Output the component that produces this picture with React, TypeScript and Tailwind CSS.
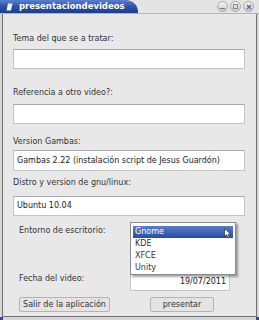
import React from 'react';

const font = { fontFamily: '"DejaVu Sans", Verdana, sans-serif' };

function Field({ value, className = '' }: { value?: string; className?: string }) {
  return (
    <div
      className={`w-[232px] h-[20px] bg-white border border-[#c4c4c4] border-t-[#a8a8a8] flex items-center px-[3px] text-[8px] text-[#222] ${className}`}
    >
      {value}
    </div>
  );
}

function WinButton({ children }: { children: React.ReactNode }) {
  return (
    <div className="w-[11px] h-[11px] rounded-full border border-[#a9a9a9] bg-gradient-to-b from-[#f4f4f4] to-[#c9c9c9] flex items-center justify-center">
      {children}
    </div>
  );
}

export default function App() {
  return (
    <div style={font} className="w-[259px] h-[320px] bg-[#d6d6d6] flex flex-col overflow-hidden relative">
      {/* title bar */}
      <div className="h-[14px] flex bg-[#e4e4e4] border-b border-[#b5b5b5] shrink-0">
        <div className="w-[138px] h-full bg-gradient-to-b from-[#5c80d0] via-[#2f52a6] to-[#1d3c8c] rounded-tr-[12px] flex items-center pl-[6px] gap-[6px]">
          <svg width="7" height="8" viewBox="0 0 7 8">
            <path d="M2 0.5 L6.5 0.5 L5 7.5 L0.5 7.5 Z" fill="#f2f2f2" />
          </svg>
          <span className="text-white font-bold text-[8.5px] leading-none">presentaciondevideos</span>
        </div>
        <div className="flex-1 flex items-center justify-end gap-[2px] pr-[5px]">
          <WinButton>
            <div className="w-[5px] h-[1px] bg-[#777] mt-[3px]" />
          </WinButton>
          <WinButton>
            <div className="w-[5px] h-[5px] border border-[#888]" />
          </WinButton>
          <WinButton>
            <svg width="6" height="6" viewBox="0 0 6 6">
              <path d="M1 1 L5 5 M5 1 L1 5" stroke="#4a66a8" strokeWidth="1.3" />
            </svg>
          </WinButton>
        </div>
      </div>

      {/* body */}
      <div className="flex-1 mx-[2px] border-x border-b border-[#707070] bg-[#e8e8e8] flex flex-col pl-[10px] text-[8px] text-[#333] leading-[10px]">
        <div className="mt-[20px]">Tema del que se a tratar:</div>
        <Field className="mt-[5px]" />

        <div className="mt-[19px]">Referencia a otro video?:</div>
        <Field className="mt-[6px]" />

        <div className="mt-[13px]">Version Gambas:</div>
        <Field className="mt-[3px] h-[21px]" value="Gambas 2.22 (instalación script de Jesus Guardón)" />

        <div className="mt-[7px]">Distro y version de gnu/linux:</div>
        <Field className="mt-[8px]" value="Ubuntu 10.04" />

        <div className="mt-[6px] h-[18px] flex items-center relative">
          <span className="w-[117px] pl-[6px]">Entorno de escritorio:</span>
          <div className="w-[105px] h-[18px] bg-[#f0f0f0] border border-[#9a9a9a]" />
          {/* open popup list */}
          <div className="absolute left-[117px] top-0 w-[106px] h-[53px] bg-white border border-[#8c8c8c] shadow-[2px_2px_2px_rgba(0,0,0,0.35)] z-10 px-[2px] pt-[3px] flex flex-col">
            <div className="h-[12px] bg-gradient-to-b from-[#5a7fcc] to-[#2b4c9e] text-white flex items-center pl-[2px] relative">
              Gnome
              <svg className="absolute right-[1px] top-[2px]" width="8" height="11" viewBox="0 0 8 11">
                <path d="M0.5 0.5 L0.5 8.5 L2.5 6.8 L4 10 L5.4 9.3 L4 6.2 L6.8 6.2 Z" fill="#fff" stroke="#333" strokeWidth="0.8" />
              </svg>
            </div>
            <div className="h-[12px] flex items-center pl-[2px] mt-[0px]">KDE</div>
            <div className="h-[12px] flex items-center pl-[2px]">XFCE</div>
            <div className="h-[12px] flex items-center pl-[2px]">Unity</div>
          </div>
        </div>

        <div className="mt-[33px] h-[18px] flex items-start">
          <span className="w-[117px] pl-[6px] mt-[1px]">Fecha del video:</span>
          <div className="w-[100px] h-[18px] bg-white border border-[#c4c4c4] border-t-[#a8a8a8] flex items-center justify-end pr-[3px] text-[#222]">
            19/07/2011
          </div>
        </div>

        <div className="mt-[6px] flex items-center pl-[6px]">
          <button className="w-[91px] h-[15px] bg-[#e4e4e4] border border-[#b3b3b3] rounded-[2px] text-[8px] text-[#333] leading-none">
            Salir de la aplicación
          </button>
          <button className="ml-[40px] w-[64px] h-[15px] bg-[#e4e4e4] border border-[#b3b3b3] rounded-[2px] text-[8px] text-[#333] leading-none">
            presentar
          </button>
        </div>
      </div>

      {/* bottom frame */}
      <div className="h-[3px] shrink-0 flex">
        <div className="w-[3px] bg-[#2b4c9e]" />
        <div className="flex-1" />
        <div className="w-[3px] bg-[#2b4c9e]" />
      </div>
    </div>
  );
}
